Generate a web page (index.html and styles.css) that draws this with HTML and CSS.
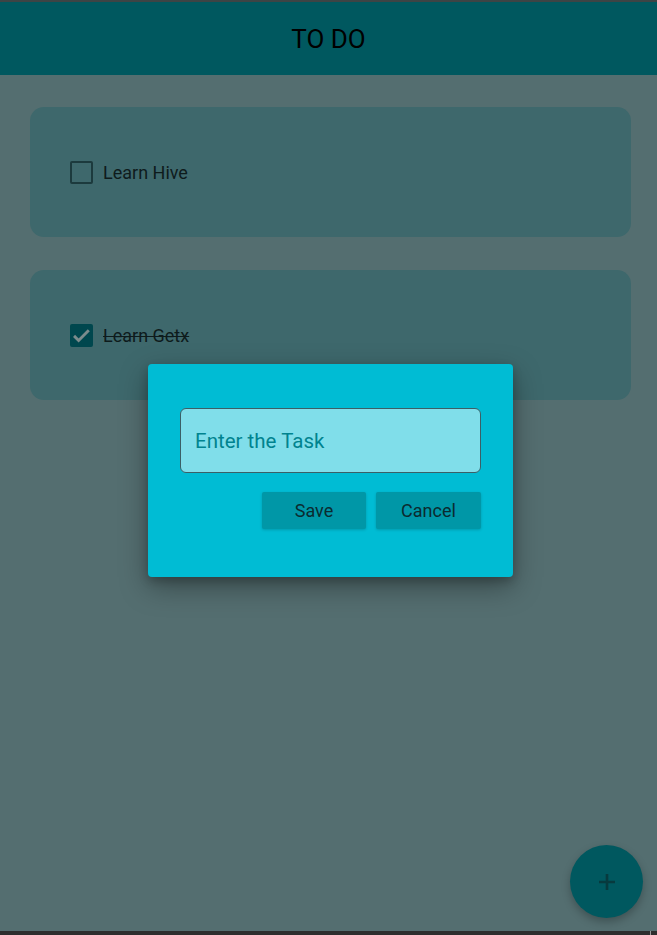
FILE: index.html
```html
<!DOCTYPE html>
<html lang="en">
<head>
<meta charset="utf-8">
<title>TO DO</title>
<link rel="stylesheet" href="styles.css">
</head>
<body>
<div class="screen">
  <div class="topline"></div>
  <header class="appbar"><h1 class="title">TO DO</h1></header>
  <main class="list">
    <div class="card">
      <span class="box"></span>
      <span class="label">Learn Hive</span>
    </div>
    <div class="card">
      <span class="box checked">
        <svg viewBox="0 0 24 24" width="23" height="23"><path d="M4.2 12.4l4.8 4.8L19.6 6.6" fill="none" stroke="#7b8b8c" stroke-width="3"/></svg>
      </span>
      <span class="label done">Learn Getx</span>
    </div>
  </main>
  <div class="bottombar"><span class="tick"></span></div>

  <div class="dialog">
    <div class="field"><span class="placeholder">Enter the Task</span></div>
    <div class="actions">
      <button class="btn">Save</button>
      <button class="btn">Cancel</button>
    </div>
  </div>

  <button class="fab" aria-label="Add">
    <svg viewBox="0 0 24 24" width="24" height="24"><path d="M12 4v16M4 12h16" stroke="#073a3e" stroke-width="2.6" fill="none"/></svg>
  </button>
</div>
</body>
</html>
```
FILE: styles.css
```css
* { box-sizing: border-box; }
html, body { margin: 0; padding: 0; }
body {
  width: 657px;
  height: 935px;
  overflow: hidden;
  font-family: Roboto, "Liberation Sans", sans-serif;
  background: #546e70;
}
.screen {
  position: relative;
  width: 657px;
  height: 935px;
  display: flex;
  flex-direction: column;
}
.topline { height: 2px; background: #3d4445; flex: none; }
.appbar {
  height: 73px;
  flex: none;
  background: #00585f;
  display: flex;
  align-items: center;
  justify-content: center;
}
.title {
  margin: 0;
  font-weight: 400;
  font-size: 26px;
  color: #000;
  letter-spacing: 0;
}
.list {
  flex: 1;
  padding: 32px 26px 0 30px;
  display: flex;
  flex-direction: column;
  gap: 33px;
}
.card {
  height: 130px;
  background: #3e686c;
  border-radius: 14px;
  display: flex;
  align-items: center;
  padding-left: 40px;
  gap: 10px;
}
.box {
  width: 23px;
  height: 23px;
  border: 2.8px solid #1c3a3d;
  border-radius: 2px;
  display: flex;
  align-items: center;
  justify-content: center;
  flex: none;
}
.box.checked {
  background: #00474e;
  border: none;
}
.label {
  font-size: 18px;
  color: #0e1b1c;
}
.label.done { text-decoration: line-through; text-decoration-thickness: 1.3px; }
.bottombar {
  height: 4px;
  flex: none;
  background: #2e2e2e;
  position: relative;
}
.tick {
  position: absolute;
  left: 650px;
  top: 0;
  width: 1px;
  height: 4px;
  background: #9a9a9a;
}
.dialog {
  position: absolute;
  left: 148px;
  top: 364px;
  width: 365px;
  height: 213px;
  background: #00bcd4;
  border-radius: 4px;
  box-shadow: 0 10px 28px rgba(0, 0, 0, 0.35), 0 4px 10px rgba(0,0,0,0.2);
  padding: 44px 32px 0 32px;
  display: flex;
  flex-direction: column;
  gap: 19px;
}
.field {
  height: 65px;
  background: #80deea;
  border: 1px solid #3b5f66;
  border-radius: 6px;
  display: flex;
  align-items: center;
  padding-left: 14px;
}
.placeholder {
  font-size: 20.5px;
  color: #00838f;
}
.actions {
  display: flex;
  justify-content: flex-end;
  gap: 10px;
}
.btn {
  height: 37px;
  width: 104px;
  border: none;
  border-radius: 2px;
  background: #0097a7;
  color: #0b2b30;
  font-family: Roboto, "Liberation Sans", sans-serif;
  font-size: 18px;
  box-shadow: 0 1px 3px rgba(0, 0, 0, 0.18);
  padding: 0;
}
.btn + .btn { width: 105px; }
.fab {
  position: absolute;
  left: 570px;
  top: 845px;
  width: 73px;
  height: 73px;
  border-radius: 50%;
  border: none;
  background: #00585f;
  box-shadow: 0 4px 8px rgba(0, 0, 0, 0.25);
  display: flex;
  align-items: center;
  justify-content: center;
  padding: 0;
}
```
